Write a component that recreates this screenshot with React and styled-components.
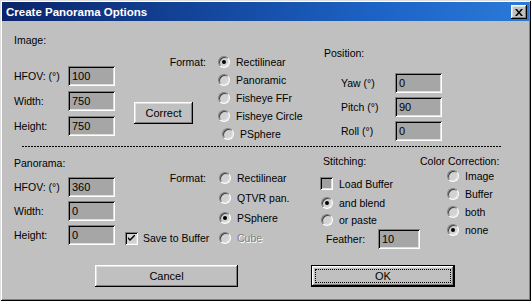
import React from 'react';
import styled, { createGlobalStyle } from 'styled-components';

const GlobalStyle = createGlobalStyle`
	body {
		margin: 0;
		background: #c0c0c0;
		font-family: "Liberation Sans", Arial, sans-serif;
		font-size: 10.5px;
		color: #000;
	}
`

const Window = styled.div`
	width: 531px;
	height: 301px;
	box-sizing: border-box;
	padding: 2px;
	background: #c0c0c0;
	display: flex;
	flex-direction: column;
	box-shadow: inset 1px 1px #dfdfdf, inset -1px -1px #000, inset 2px 2px #fff, inset -2px -2px #808080;
`

const TitleBar = styled.div`
	height: 19px;
	flex: none;
	display: flex;
	align-items: center;
	justify-content: space-between;
	padding: 0 2px 0 4px;
	background: linear-gradient(to right, #0a246a 0%, #1c62c4 70%, #2a7ad8 100%);
	color: #fff;
	font-weight: bold;
	font-size: 11.5px;
`

const raised = `
	background: #c0c0c0;
	border: none;
	box-shadow: inset -1px -1px #000, inset 1px 1px #fff, inset -2px -2px #808080, inset 2px 2px #dfdfdf;
`

const CloseButton = styled.div`
	${raised}
	width: 16px;
	height: 14px;
	display: flex;
	align-items: center;
	justify-content: center;
	margin-top: 1px;
`

const Section = styled.div`
	height: ${p => p.h}px;
	flex: none;
	display: flex;
	padding-left: 12px;
`

const Column = styled.div`
	display: flex;
	flex-direction: column;
	width: ${p => p.w}px;
	margin-left: ${p => p.ml || 0}px;
	padding-top: ${p => p.pt || 0}px;
`

const Heading = styled.div`
	line-height: ${p => p.lh || 12}px;
	padding-left: ${p => p.indent || 0}px;
	margin-bottom: ${p => p.mb || 0}px;
	white-space: nowrap;
`

const FieldList = styled.div`
	display: flex;
	flex-direction: column;
	gap: ${p => p.gap}px;
`

const FieldRow = styled.div`
	display: flex;
	align-items: center;
	height: 20px;
	padding-left: ${p => p.indent || 0}px;
	margin-top: ${p => p.mt || 0}px;
`

const FieldLabel = styled.span`
	width: ${p => p.w}px;
	flex: none;
	white-space: nowrap;
`

const TextBox = styled.div`
	width: 47px;
	height: 20px;
	box-sizing: border-box;
	padding: 2px 0 0 4px;
	background: #a6a6a6;
	box-shadow: inset 1px 1px #808080, inset -1px -1px #fff, inset 2px 2px #000, inset -2px -2px #dfdfdf;
	line-height: 16px;
	font-size: 11px;
`

const PushButton = styled.div`
	${raised}
	width: ${p => p.w}px;
	height: 22px;
	box-sizing: border-box;
	display: flex;
	align-items: center;
	justify-content: center;
	font-size: 11px;
	margin-left: ${p => p.ml || 0}px;
	position: relative;
	${p => p.$default && `
		box-shadow: inset 0 0 0 1px #000, inset -2px -2px #000, inset 2px 2px #fff, inset -3px -3px #808080, inset 3px 3px #dfdfdf;
	`}
`

const FocusRing = styled.span`
	position: absolute;
	inset: 4px;
	border: 1px dotted #000;
`

const FormatGrid = styled.div`
	display: grid;
	grid-template-columns: ${p => p.cols};
	grid-auto-rows: ${p => p.row}px;
	margin-left: ${p => p.ml}px;
	padding-top: ${p => p.pt}px;
	align-content: start;
`

const GridLabel = styled.div`
	text-align: right;
	padding-right: 12px;
	align-self: center;
	grid-column: 1;
	grid-row: 1;
`

const GridCorner = styled.div`
	grid-column: 1;
	grid-row: ${p => p.rows};
	align-self: ${p => p.align || 'center'};
	justify-self: start;
	margin-bottom: ${p => p.mb || 0}px;
`

const RadioRow = styled.div`
	display: flex;
	align-items: center;
	gap: 6px;
	height: ${p => p.h || 18}px;
	padding-left: ${p => p.indent || 0}px;
	grid-column: ${p => p.col || 'auto'};
	color: ${p => p.disabled ? '#808080' : '#000'};
	text-shadow: ${p => p.disabled ? '1px 1px 0 #fff' : 'none'};
	white-space: nowrap;
`

const RadioDot = styled.span`
	width: 12px;
	height: 12px;
	flex: none;
	box-sizing: border-box;
	border-radius: 50%;
	background: #d2d2d2;
	border: 1px solid;
	border-color: #808080 #fff #fff #808080;
	box-shadow: inset 1px 1px #404040, inset -1px -1px #dfdfdf;
	display: flex;
	align-items: center;
	justify-content: center;
	&::after {
		content: '';
		width: 4px;
		height: 4px;
		border-radius: 50%;
		background: ${p => p.checked ? '#000' : 'transparent'};
	}
`

const CheckRow = styled.div`
	display: flex;
	align-items: center;
	gap: ${p => p.gap || 6}px;
	height: 13px;
	margin-top: ${p => p.mt || 0}px;
	white-space: nowrap;
`

const CheckBox = styled.span`
	width: 13px;
	height: 13px;
	flex: none;
	box-sizing: border-box;
	background: ${p => p.fill};
	box-shadow: inset 1px 1px #808080, inset -1px -1px #fff, inset 2px 2px #000, inset -2px -2px #dfdfdf;
	display: flex;
	align-items: center;
	justify-content: center;
`

const RadioList = styled.div`
	display: flex;
	flex-direction: column;
	margin-top: ${p => p.mt || 0}px;
`

const Divider = styled.div`
	height: 1px;
	flex: none;
	width: 480px;
	margin-left: 20px;
	background: repeating-linear-gradient(to right, #000 0 2px, transparent 2px 3px);
`

const ButtonRow = styled.div`
	display: flex;
	height: 22px;
	flex: none;
	padding-left: 93px;
`

const Radio = ({ label, checked, ...rest }) => (
	<RadioRow {...rest}>
		<RadioDot checked={checked} />
		<span>{label}</span>
	</RadioRow>
)

const Field = ({ label, value, w = 54, indent, mt }) => (
	<FieldRow indent={indent} mt={mt}>
		<FieldLabel w={w}>{label}</FieldLabel>
		<TextBox>{value}</TextBox>
	</FieldRow>
)

export default function App() {
	return (
		<React.Fragment>
			<GlobalStyle />
			<Window>
				<TitleBar>
					<span>Create Panorama Options</span>
					<CloseButton>
						<svg width="8" height="7" viewBox="0 0 8 7">
							<path d="M0 0h2l2 2.5L6 0h2L5 3.5 8 7H6L4 4.5 2 7H0l3-3.5z" fill="#000" />
						</svg>
					</CloseButton>
				</TitleBar>

				<Section h={125}>
					<Column w={101} pt={13}>
						<Heading mb={20}>Image:</Heading>
						<FieldList gap={5}>
							<Field label="HFOV: (°)" value="100" />
							<Field label="Width:" value="750" />
							<Field label="Height:" value="750" />
						</FieldList>
					</Column>
					<FormatGrid cols="84px 106px" row={18} ml={19} pt={32}>
						<GridLabel>Format:</GridLabel>
						<Radio col={2} label="Rectilinear" checked />
						<Radio col={2} label="Panoramic" />
						<Radio col={2} label="Fisheye FFr" />
						<Radio col={2} label="Fisheye Circle" />
						<Radio col={2} label="PSphere" indent={4} />
						<GridCorner rows="3 / 5" align="end" mb={1}>
							<PushButton w={59}>Correct</PushButton>
						</GridCorner>
					</FormatGrid>
					<Column w={130} pt={26}>
						<Heading mb={14}>Position:</Heading>
						<FieldList gap={4}>
							<Field label="Yaw (°)" value="0" indent={17} />
							<Field label="Pitch (°)" value="90" indent={17} />
							<Field label="Roll (°)" value="0" indent={17} />
						</FieldList>
					</Column>
				</Section>

				<Divider />

				<Section h={118}>
					<Column w={101} pt={10}>
						<Heading mb={8}>Panorama:</Heading>
						<FieldList gap={4}>
							<Field label="HFOV: (°)" value="360" />
							<Field label="Width:" value="0" />
							<Field label="Height:" value="0" />
						</FieldList>
					</Column>
					<FormatGrid cols="93px 102px" row={20} ml={10} pt={21}>
						<GridLabel>Format:</GridLabel>
						<Radio col={2} h={20} indent={1} label="Rectilinear" />
						<Radio col={2} h={20} indent={1} label="QTVR pan." />
						<Radio col={2} h={20} indent={1} label="PSphere" checked />
						<Radio col={2} h={20} indent={1} label="Cube" disabled />
						<GridCorner rows="4">
							<CheckRow gap={5}>
								<CheckBox fill="#d2d2d2">
									<svg width="7" height="7" viewBox="0 0 7 7">
										<path d="M0 2v2l2 2 5-5V-1L2 4z" fill="#000" />
									</svg>
								</CheckBox>
								<span>Save to Buffer</span>
							</CheckRow>
						</GridCorner>
					</FormatGrid>
					<Column w={100} pt={8}>
						<Heading indent={3}>Stitching:</Heading>
						<CheckRow mt={10}>
							<CheckBox fill="#a0a0a0" />
							<span>Load Buffer</span>
						</CheckRow>
						<RadioList mt={4}>
							<Radio h={17} indent={1} label="and blend" checked />
							<Radio h={17} indent={1} label="or paste" />
						</RadioList>
						<Field label="Feather:" value="10" indent={6} w={52} mt={1} />
					</Column>
					<Column w={100} pt={9}>
						<Heading lh={11}>Color Correction:</Heading>
						<RadioList>
							<Radio indent={27} label="Image" />
							<Radio indent={27} label="Buffer" />
							<Radio indent={27} label="both" />
							<Radio indent={27} label="none" checked />
						</RadioList>
					</Column>
				</Section>

				<ButtonRow>
					<PushButton w={143}>Cancel</PushButton>
					<PushButton w={144} ml={73} $default>
						<FocusRing />
						OK
					</PushButton>
				</ButtonRow>
			</Window>
		</React.Fragment>
	)
}
